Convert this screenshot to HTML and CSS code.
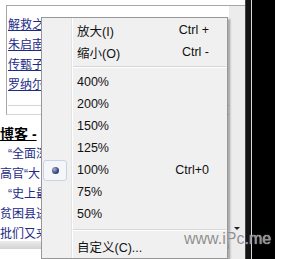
FILE: index.html
```html
<!DOCTYPE html>
<html lang="zh-CN">
<head>
    <meta charset="utf-8">
    <title>缩放菜单</title>
    <link rel="stylesheet" href="styles.css">
</head>
<body>
    <div class="browser">
        <div class="viewport">
            <div class="page">
                <div class="box">
                    <a class="link" href="#">解救之道</a>
                    <a class="link" href="#">朱启南</a>
                    <a class="link" href="#">传甄子丹</a>
                    <a class="link" href="#">罗纳尔多</a>
                    <div class="rule"></div>
                </div>
                <div class="heading">博客 -</div>
                <p class="line indent">“全面深化</p>
                <p class="line">高官“大</p>
                <p class="line indent">“史上最</p>
                <p class="line">贫困县进</p>
                <p class="line last">批们又来</p>
                <div class="hscroll"></div>
            </div>
            <div class="vscroll">
                <span class="arrow"></span>
            </div>
        </div>

        <!-- zoom context menu -->
        <div class="menu">
            <div class="item"><span class="gutter"></span><span class="label">放大(I)</span><span class="key">Ctrl +</span></div>
            <div class="item"><span class="gutter"></span><span class="label">缩小(O)</span><span class="key">Ctrl -</span></div>
            <div class="sep"></div>
            <div class="item"><span class="gutter"></span><span class="label">400%</span></div>
            <div class="item"><span class="gutter"></span><span class="label">200%</span></div>
            <div class="item"><span class="gutter"></span><span class="label">150%</span></div>
            <div class="item"><span class="gutter"></span><span class="label">125%</span></div>
            <div class="item"><span class="gutter"><span class="check"><span class="dot"></span></span></span><span class="label">100%</span><span class="key">Ctrl+0</span></div>
            <div class="item"><span class="gutter"></span><span class="label">75%</span></div>
            <div class="item"><span class="gutter"></span><span class="label">50%</span></div>
            <div class="sep tall"></div>
            <div class="item"><span class="gutter"></span><span class="label">自定义(C)...</span></div>
        </div>

        <div class="watermark">www.iPc.me</div>
    </div>
    <div class="frame">
        <span class="f1"></span>
        <span class="f2"></span>
        <span class="f3"></span>
        <span class="f4"></span>
    </div>
    <div class="edge"></div>
</body>
</html>
```
FILE: styles.css
```css
body {
    margin: 0;
    width: 284px;
    height: 259px;
    overflow: hidden;
    display: flex;
    background: #fff;
    font-family: "Liberation Sans", "Noto Sans CJK SC", sans-serif;
}

.browser {
    position: relative;
    width: 245px;
    padding-top: 5px;
    display: flex;
    flex-direction: column;
}

.viewport {
    flex: 1;
    display: flex;
    min-height: 0;
}

.page {
    flex: 1;
    overflow: hidden;
    font-family: "Liberation Sans", "Noto Sans CJK SC", sans-serif;
    font-size: 12px;
    white-space: nowrap;
}

.box {
    margin-left: 6px;
    border-top: 1px solid #a7a7a7;
    border-left: 1px solid #a7a7a7;
    border-bottom: 1px solid #d4d4d4;
    padding: 9px 0 0 1px;
    box-sizing: border-box;
    height: 110px;
}

.link {
    display: block;
    height: 20px;
    line-height: 20px;
    color: #1d2a86;
    text-decoration: underline;
}

.rule {
    margin-top: 10px;
    border-top: 1px solid #d4d4d4;
}

.heading {
    margin-top: 9px;
    line-height: 20px;
    font-weight: bold;
    font-size: 14px;
    color: #000;
    text-decoration: underline;
}

.line {
    margin: 0;
    line-height: 20px;
    height: 20px;
    color: #1d2a86;
}

.line.indent {
    padding-left: 8px;
}

.line.last {
    height: 17px;
    overflow: hidden;
}

.hscroll {
    height: 8px;
    background: linear-gradient(#ececec, #d2d2d2);
}

.vscroll {
    width: 16px;
    border-top: 1px solid #a7a7a7;
    background: #ececec;
    display: flex;
    flex-direction: column;
    justify-content: flex-end;
    align-items: center;
    padding-bottom: 29px;
}

.arrow {
    width: 0;
    height: 0;
    border-left: 3px solid transparent;
    border-right: 3px solid transparent;
    border-top: 3px solid #222;
}

.menu {
    position: absolute;
    left: 41px;
    top: 17px;
    width: 185px;
    padding: 1px 0;
    border: 1px solid #979797;
    box-shadow: 2px 2px 2px rgba(0, 0, 0, 0.35);
    background: linear-gradient(to right, #f0f0f0 29px, #e2e3e3 29px, #e2e3e3 30px, #fff 30px, #fff 31px, #f0f0f0 31px);
    font-size: 12.5px;
    color: #111;
}

.item {
    display: flex;
    align-items: center;
    height: 22px;
}

.gutter {
    width: 30px;
    height: 22px;
    display: flex;
    align-items: center;
}

.label {
    flex: 1;
    padding-left: 5px;
}

.key {
    padding-right: 18px;
}

.check {
    margin-left: 1px;
    width: 22px;
    height: 19px;
    border: 1px solid #c9d3e0;
    border-radius: 3px;
    background: #f4f6f9;
    display: flex;
    align-items: center;
    justify-content: center;
}

.dot {
    width: 7px;
    height: 7px;
    border-radius: 50%;
    background: radial-gradient(circle at 35% 35%, #a7b4d4, #34467a 60%, #1d2a52);
}

.sep {
    height: 8px;
    margin-left: 31px;
    margin-right: 1px;
    display: flex;
    flex-direction: column;
    justify-content: center;
}

.sep::before {
    content: "";
    border-top: 1px solid #d7d7d7;
    border-bottom: 1px solid #fff;
}

.sep.tall {
    height: 10px;
}

.watermark {
    position: absolute;
    left: 184px;
    top: 231px;
    font-size: 16px;
    line-height: 16px;
    color: #8e8e8e;
    text-shadow: 0 0 1px #fff;
}

.frame {
    width: 30px;
    display: flex;
}

.frame span {
    display: block;
}

.f1 {
    width: 1px;
    background: #444;
}

.f2 {
    width: 5px;
    background: #141414;
}

.f3 {
    width: 1px;
    background: #d8d8d8;
}

.f4 {
    flex: 1;
    background: #000;
}

.edge {
    flex: 1;
}
```
